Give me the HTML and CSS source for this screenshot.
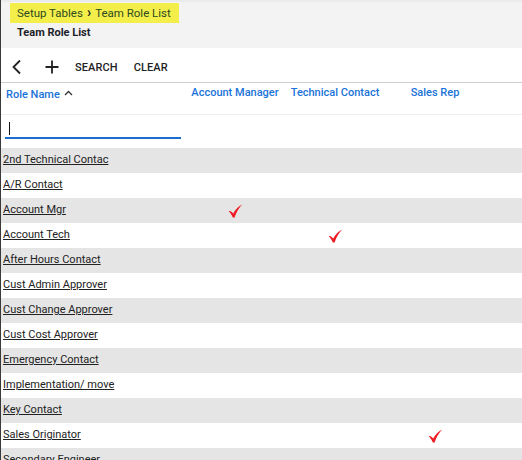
FILE: index.html
```html
<!DOCTYPE html>
<html lang="en">
<head>
  <meta charset="UTF-8">
  <title>Team Role List</title>
  <link rel="stylesheet" href="styles.css">
</head>
<body>
  <div class="page">
    <div class="header">
      <div class="crumbs"><span>Setup Tables</span><span class="sep">&#8250;</span><span>Team Role List</span></div>
      <div class="title">Team Role List</div>
    </div>
    <div class="toolbar">
      <a href="javascript:;" class="icon back">
        <svg width="12" height="16" viewBox="0 0 12 16"><path d="M9 1.5 L2.5 8 L9 14.5" fill="none" stroke="#222" stroke-width="1.8"/></svg>
      </a>
      <a href="javascript:;" class="icon add">
        <svg width="14" height="14" viewBox="0 0 14 14"><path d="M7 0.5 V13.5 M0.5 7 H13.5" fill="none" stroke="#222" stroke-width="1.8"/></svg>
      </a>
      <a href="javascript:;" class="btn">SEARCH</a>
      <a href="javascript:;" class="btn">CLEAR</a>
    </div>
    <div class="grid">
      <div class="row head">
        <div class="cell name">Role Name <span class="caret">
          <svg width="9" height="6" viewBox="0 0 9 6"><path d="M1 5 L4.5 1.5 L8 5" fill="none" stroke="#333" stroke-width="1.3"/></svg>
        </span></div>
        <div class="cell mid">Account Manager</div>
        <div class="cell mid">Technical Contact</div>
        <div class="cell mid">Sales Rep</div>
      </div>
      <div class="row filter">
        <div class="cell name"><div class="input"><span class="cursor"></span></div></div>
      </div>
      <div class="rows" id="rows"></div>
    </div>
  </div>
  <script>
    // 角色数据: 名称, 客户经理, 技术联系人, 销售代表
    var roles = [
      ['2nd Technical Contac', 0, 0, 0],
      ['A/R Contact', 0, 0, 0],
      ['Account Mgr', 1, 0, 0],
      ['Account Tech', 0, 1, 0],
      ['After Hours Contact', 0, 0, 0],
      ['Cust Admin Approver', 0, 0, 0],
      ['Cust Change Approver', 0, 0, 0],
      ['Cust Cost Approver', 0, 0, 0],
      ['Emergency Contact', 0, 0, 0],
      ['Implementation/ move', 0, 0, 0],
      ['Key Contact', 0, 0, 0],
      ['Sales Originator', 0, 0, 1],
      ['Secondary Engineer', 0, 0, 0]
    ];
    var check = '<svg width="15" height="14" viewBox="0 0 15 14"><path d="M0.8 7.2 C2.2 6.4 3.4 7.4 5.2 9.6 C7.6 5.4 10.6 2.2 14.4 0.6 C11.4 3.4 8.6 7.6 6.6 13.4 L4.8 13.4 C3.6 10.8 2.4 8.8 0.8 7.2 Z" fill="#ee1c25"/></svg>';
    var html = '';
    for (var i = 0; i < roles.length; i++) {
      var r = roles[i];
      html += '<div class="row item' + (i % 2 === 0 ? ' odd' : '') + '">';
      html += '<div class="cell name"><a href="javascript:;">' + r[0] + '</a></div>';
      for (var j = 1; j < 4; j++) {
        html += '<div class="cell mid">' + (r[j] ? check : '') + '</div>';
      }
      html += '</div>';
    }
    document.getElementById('rows').innerHTML = html;
  </script>
</body>
</html>
```

FILE: styles.css
```css
* {
  box-sizing: border-box;
}
body {
  margin: 0;
  font-family: Roboto, "Liberation Sans", Arial, sans-serif;
  font-size: 11px;
  color: #222;
  background: #fff;
}
.page {
  border-left: 1px solid #3a3a3a;
  height: 460px;
  overflow: hidden;
}
.header {
  height: 48px;
  background: #f3f3f3;
  border-top: 2px solid #ebebeb;
  padding: 1px 0 0 9px;
}
.crumbs {
  display: inline-flex;
  align-items: center;
  height: 20px;
  padding: 0 8px 0 7px;
  background: #f4ee4a;
  color: #2c4a1e;
  font-size: 11.5px;
}
.crumbs .sep {
  font-size: 14px;
  font-weight: bold;
  margin: -2px 4px 0 4px;
  color: #222;
}
.title {
  margin: 3px 0 0 7px;
  font-size: 11px;
  font-weight: bold;
  color: #1e1e2a;
  line-height: 14px;
}
.toolbar {
  height: 35px;
  display: flex;
  align-items: center;
  border-bottom: 1px solid #cfcfcf;
  padding: 4px 0 0 10px;
}
.toolbar a {
  text-decoration: none;
  color: #222;
}
.icon {
  display: flex;
  align-items: center;
}
.back {
  margin-right: 22px;
}
.add {
  margin-right: 16px;
}
.btn {
  font-size: 11px;
  font-weight: 500;
  margin-right: 16px;
  letter-spacing: 0.1px;
}
.row {
  display: grid;
  grid-template-columns: 184px 100px 100px 100px 1fr;
}
.head {
  height: 32px;
  border-bottom: 1px solid #efefef;
  color: #1a73d8;
  font-weight: 500;
  padding-top: 2px;
  line-height: 16px;
}
.head .name {
  padding-left: 5px;
}
.caret {
  display: inline-block;
  margin-left: 1px;
  vertical-align: 2px;
}
.mid {
  text-align: center;
}
.filter {
  height: 33px;
}
.input {
  margin: 4px 4px 0 4px;
  height: 20px;
  border-bottom: 2px solid #1a6fce;
  position: relative;
}
.cursor {
  position: absolute;
  left: 4px;
  top: 3px;
  width: 1px;
  height: 13px;
  background: #111;
}
.item {
  height: 25px;
  line-height: 24px;
}
.item.odd {
  background: #e5e5e5;
}
.item .name {
  padding-left: 2px;
  white-space: nowrap;
  overflow: hidden;
}
.item a {
  color: #222;
}
.item .mid {
  display: flex;
  justify-content: center;
  align-items: center;
}
```
